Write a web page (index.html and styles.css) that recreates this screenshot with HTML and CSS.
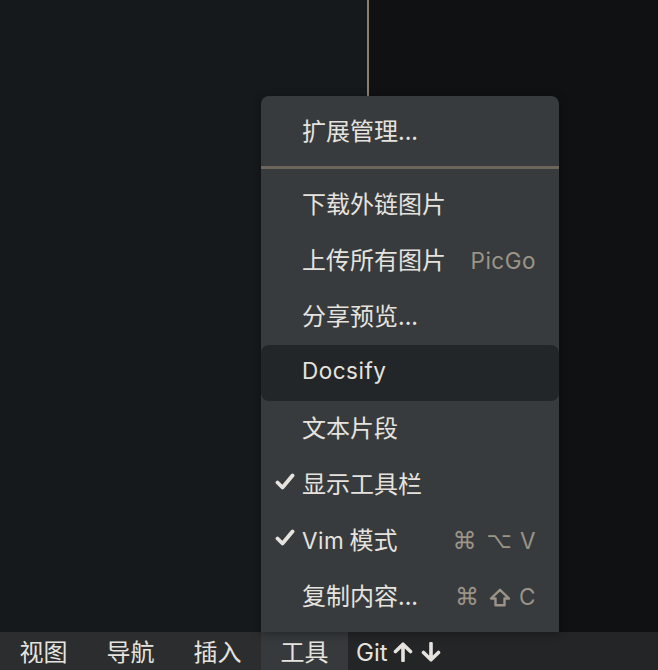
FILE: index.html
```html
<!DOCTYPE html>
<html lang="zh-CN">
<head>
<meta charset="utf-8">
<link rel="stylesheet" href="styles.css">
</head>
<body>
<div class="app">
  <div class="panes">
    <div class="pane pane-left"></div>
    <div class="pane-divider"></div>
    <div class="pane pane-right"></div>

    <div class="menu">
      <div class="item"><span class="label">扩展管理...</span></div>
      <div class="sep"></div>
      <div class="item"><span class="label">下载外链图片</span></div>
      <div class="item"><span class="label">上传所有图片</span><span class="shortcut lat">PicGo</span></div>
      <div class="item"><span class="label">分享预览...</span></div>
      <div class="item active"><span class="label lat">Docsify</span></div>
      <div class="item"><span class="label">文本片段</span></div>
      <div class="item">
        <svg class="check" viewBox="0 0 20 18" width="20" height="18"><path d="M2.5 9.5 L7.5 14.5 L17.5 2.5" fill="none" stroke="#e6e3de" stroke-width="3.8" stroke-linecap="round" stroke-linejoin="round"/></svg>
        <span class="label">显示工具栏</span>
      </div>
      <div class="item">
        <svg class="check" viewBox="0 0 20 18" width="20" height="18"><path d="M2.5 9.5 L7.5 14.5 L17.5 2.5" fill="none" stroke="#e6e3de" stroke-width="3.8" stroke-linecap="round" stroke-linejoin="round"/></svg>
        <span class="label"><span class="lat">Vim</span> 模式</span>
        <span class="shortcut keys"><span class="sym cmd">⌘</span><span class="sym">⌥</span><span class="lat">V</span></span>
      </div>
      <div class="item">
        <span class="label">复制内容...</span>
        <span class="shortcut keys"><span class="sym cmd">⌘</span><svg class="shift" viewBox="0 0 22 19" width="22" height="19"><path d="M11 1.8 L2 10.5 H6.5 V17.2 H15.5 V10.5 H20 Z" fill="none" stroke="#9c9486" stroke-width="2.4" stroke-linejoin="round"/></svg><span class="lat">C</span></span>
      </div>
    </div>
  </div>

  <div class="bar">
    <div class="tab">视图</div>
    <div class="tab">导航</div>
    <div class="tab">插入</div>
    <div class="tab tab-on">工具</div>
    <div class="git">
      <span class="git-text">Git</span>
      <svg class="arrow" viewBox="0 0 20 20" width="20" height="20"><path d="M10 18.5 V3 M2.5 9.5 L10 2.2 L17.5 9.5" fill="none" stroke="#e6e3de" stroke-width="3.6" stroke-linecap="round" stroke-linejoin="round"/></svg>
      <svg class="arrow" viewBox="0 0 20 20" width="20" height="20"><path d="M10 1.5 V17 M2.5 10.5 L10 17.8 L17.5 10.5" fill="none" stroke="#e6e3de" stroke-width="3.6" stroke-linecap="round" stroke-linejoin="round"/></svg>
    </div>
  </div>
</div>
</body>
</html>
```

FILE: styles.css
```css
* { box-sizing: border-box; }
html, body { margin: 0; padding: 0; }
body {
  width: 658px;
  height: 670px;
  overflow: hidden;
  background: #15181a;
  font-family: Inter, "Noto Sans CJK SC", sans-serif;
  color: #e6e3de;
}
.app {
  display: flex;
  flex-direction: column;
  height: 670px;
}
.panes {
  position: relative;
  flex: 1;
  display: flex;
}
.pane-left { width: 367px; background: #16191b; }
.pane-divider { width: 2px; background: #8a8070; }
.pane-right { flex: 1; background: #0f1112; }

.menu {
  position: absolute;
  left: 261px;
  top: 96px;
  width: 298px;
  bottom: 0;
  background: #373b3e;
  border-radius: 8px 8px 0 0;
  padding-top: 8px;
  box-shadow: 0 2px 10px rgba(0,0,0,0.35);
  display: flex;
  flex-direction: column;
}
.item {
  position: relative;
  height: 56px;
  display: flex;
  align-items: center;
  padding: 0 23px 6px 41px;
  font-family: "Noto Sans CJK SC", sans-serif;
  font-size: 24px;
  border-radius: 8px;
}
.item .label { flex: 1; white-space: nowrap; }
.lat {
  font-family: Inter, sans-serif;
  font-size: 22.5px;
  font-weight: 400;
  letter-spacing: 0.5px;
}
.item.active { background: #232629; }
.sep {
  height: 3px;
  background: #6b655a;
  margin: 6px 0 8px;
}
.check {
  position: absolute;
  left: 14px;
  top: 16px;
}
.shortcut { color: #9c9486; white-space: nowrap; margin-top: 5px; }
.keys {
  display: flex;
  align-items: center;
  gap: 8px;
}
.sym {
  font-family: "DejaVu Sans", sans-serif;
  font-size: 22px;
}
.sym.cmd { font-size: 24px; margin-right: 2px; }
.shift { display: block; margin-top: 1px; }

.bar {
  height: 38px;
  flex: 0 0 38px;
  display: flex;
  background: #2b2d2f;
  font-size: 24px;
}
.tab {
  width: 87px;
  display: flex;
  align-items: center;
  justify-content: center;
  font-family: "Noto Sans CJK SC", sans-serif;
  padding-bottom: 1px;
}
.tab-on { background: #363a3d; }
.git {
  flex: 1;
  display: flex;
  align-items: center;
  gap: 8px;
  padding-left: 8px;
  padding-top: 2px;
  background: #232527;
}
.git-text { font-family: Inter, sans-serif; margin-right: -3px; }
.arrow { display: block; }
```
